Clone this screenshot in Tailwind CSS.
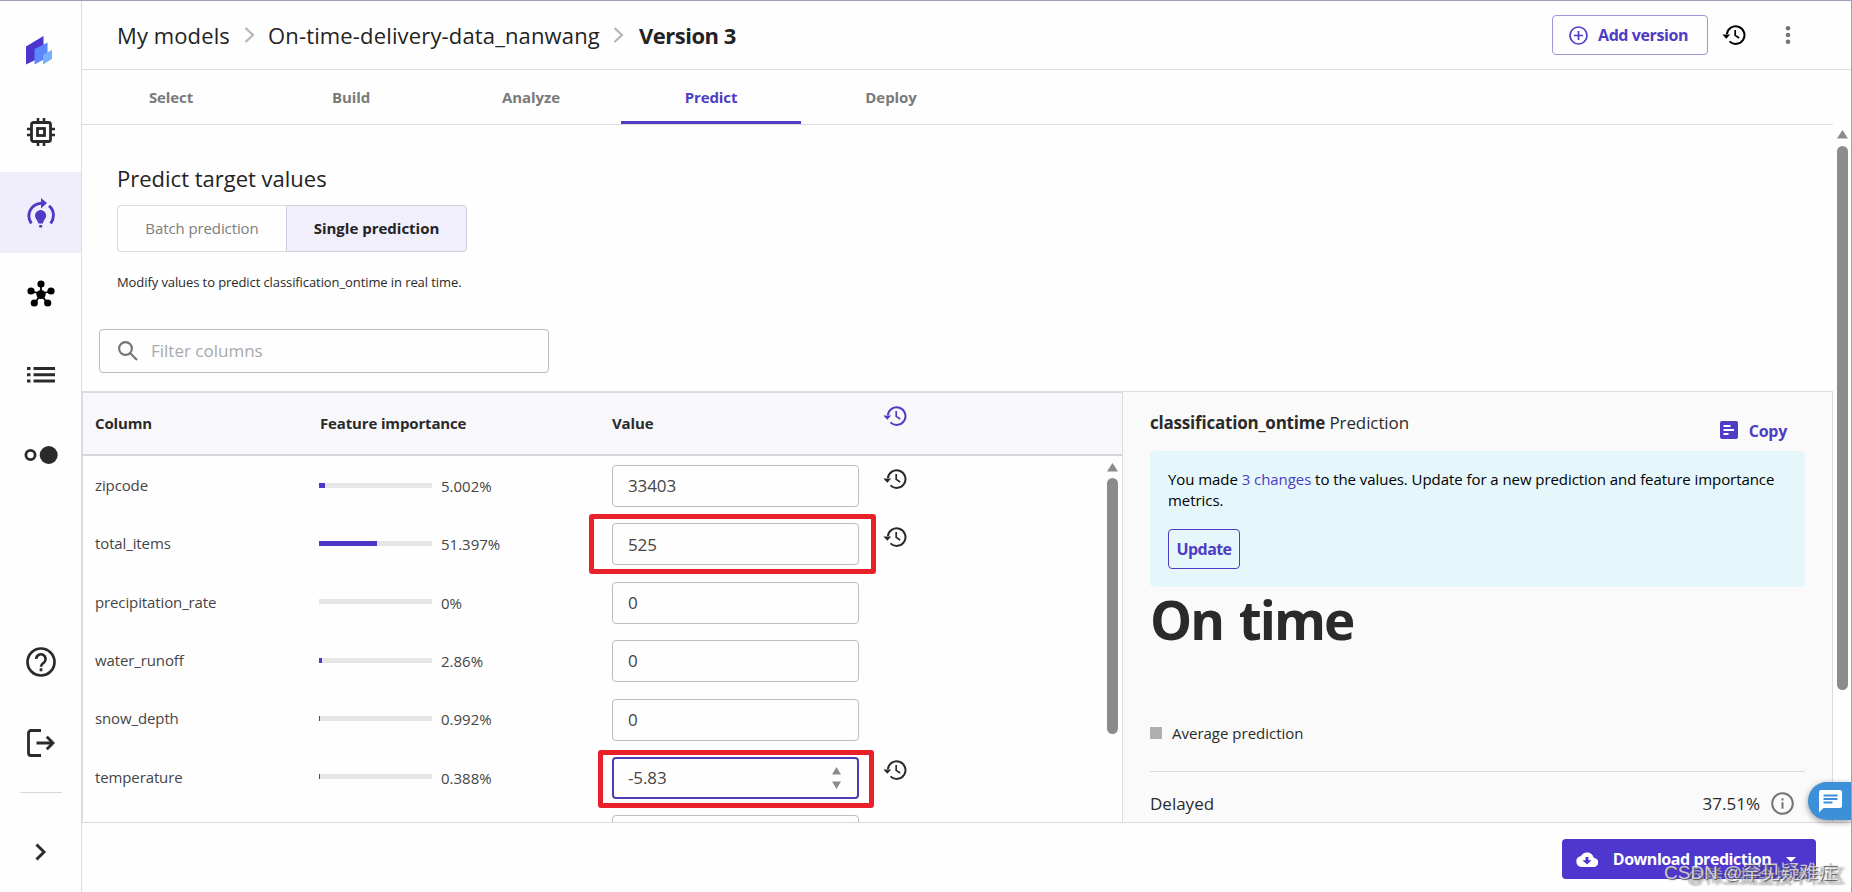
<!DOCTYPE html>
<html lang="en">
<head>
    <meta charset="utf-8">
    <title>My models - Version 3</title>
    <script src="https://cdn.jsdelivr.net/npm/@tailwindcss/browser@4"></script>
</head>
<body class="relative w-[1852px] h-[892px] overflow-hidden bg-[#fefefe] border-t border-r border-[#a19eb5] font-['Open_Sans','Noto_Sans',sans-serif] text-[15px] text-[#2a2a2a]">

<svg class="hidden">
    <symbol id="history" viewBox="0 0 24 24">
        <path d="M4.7 11.2A8.8 8.8 0 1 1 7.3 18.4" fill="none" stroke="currentColor" stroke-width="2" transform="translate(.2 0)"/>
        <path d="M.4 11.6h7.8L4.3 15.8z" fill="currentColor"/>
        <path d="M13.2 7v5.4l4 2.6" fill="none" stroke="currentColor" stroke-width="1.7"/>
    </symbol>
</svg>

<div class="flex h-full">
    <!-- Sidebar -->
    <nav class="w-[82px] shrink-0 border-r border-[#dcdce0] flex flex-col items-center">
        <div class="h-[90px] w-full flex items-center justify-center pt-2 pr-0.5">
            <svg class="w-[27px] h-[29px]" viewBox="0 0 27 29">
                <path d="M0 10.500 17.500 0v20L0 28.500z" fill="#4c35cf"/>
                <path d="M8.500 13 21.500 6.500v15L8.500 28.500z" fill="#5c86fb"/>
                <path d="M17 18.500 26 14v9L17 28.500z" fill="#77b0fd"/>
            </svg>
        </div>
        <div class="h-[81px] w-full flex items-center justify-center">
            <svg class="w-7 h-7" viewBox="0 0 28 28" fill="none" stroke="currentColor">
                <rect x="4.500" y="4.500" width="19" height="19" rx="2" stroke-width="2.800"/>
                <rect x="10.500" y="10.500" width="7" height="7" stroke-width="2.800"/>
                <path d="M11 0v4M17 0v4M11 24v4M17 24v4M0 11h4M0 17h4M24 11h4M24 17h4" stroke-width="2.600"/>
            </svg>
        </div>
        <div class="h-[81px] w-full flex items-center justify-center bg-[#f0eefa] text-[#4f3cc4]">
            <svg class="w-7 h-[30px]" viewBox="0 0 28 30" fill="currentColor">
                <path d="M4.300 25.500C-1.500 16.500 4 5.700 14.500 5.200" fill="none" stroke="currentColor" stroke-width="2.900"/>
                <path d="M22 7.800C27.600 12.500 27.700 19.500 23.700 25.500" fill="none" stroke="currentColor" stroke-width="2.900"/>
                <path d="M14 0l6 5-6 5.500z"/>
                <path d="M13.600 12a5.600 5.600 0 0 1 5.600 5.600c0 3-2.400 4-3.400 8h-4.400c-1-4-3.400-5-3.400-8A5.600 5.600 0 0 1 13.600 12z"/>
                <rect x="12.200" y="27" width="3" height="2.500"/>
            </svg>
        </div>
        <div class="h-[81px] w-full flex items-center justify-center text-black">
            <svg class="w-7 h-7" viewBox="0 0 28 28" fill="currentColor">
                <path d="M14 4v10L4 11M14 14l10-3M14 14L7.300 24M14 14l6.700 10" fill="none" stroke="currentColor" stroke-width="1.800"/>
                <circle cx="14" cy="14.500" r="4.600"/><circle cx="14" cy="4" r="3.600"/><circle cx="4" cy="11" r="3.600"/>
                <circle cx="24" cy="11" r="3.600"/><circle cx="7.300" cy="23" r="3.600"/><circle cx="20.700" cy="23" r="3.600"/>
            </svg>
        </div>
        <div class="h-[81px] w-full flex items-center justify-center">
            <svg class="w-7 h-4" viewBox="0 0 28 16" stroke="currentColor" stroke-width="3">
                <path d="M0 1.500h3.500M6.500 1.500H28M0 7.800h3.500M6.500 7.800H28M0 14.100h3.500M6.500 14.100H28"/>
            </svg>
        </div>
        <div class="h-[81px] w-full flex items-center justify-center pb-0.5">
            <svg class="w-[34px] h-[18px]" viewBox="0 0 34 18">
                <circle cx="6.500" cy="9" r="4.600" fill="none" stroke="currentColor" stroke-width="2.800"/>
                <circle cx="24.700" cy="9" r="9" fill="currentColor"/>
            </svg>
        </div>
        <div class="mt-auto h-[81px] w-full flex items-center justify-center">
            <svg class="w-[30px] h-[30px]" viewBox="0 0 30 30" fill="none" stroke="currentColor" stroke-width="2.700">
                <circle cx="15" cy="15" r="13.500"/>
                <path d="M10.200 12a4.700 4.700 0 1 1 7.600 3.700c-1.800 1.400-2.800 2-2.800 4M15 21.300v2.900"/>
            </svg>
        </div>
        <div class="h-[81px] w-full flex items-center justify-center">
            <svg class="w-7 h-7" viewBox="0 0 28 28" fill="none" stroke="currentColor" stroke-width="2.800">
                <path d="M14 1.500H4A2.500 2.500 0 0 0 1.500 4v20A2.500 2.500 0 0 0 4 26.500h10M9.500 14H26M19.800 7.800 26 14l-6.200 6.200"/>
            </svg>
        </div>
        <div class="mt-[9px] w-[42px] border-t border-[#d8d8d8]"></div>
        <div class="h-[99px] pt-[50px]">
            <svg class="w-3 h-[18px]" viewBox="0 0 12 18" fill="none" stroke="currentColor" stroke-width="2.900"><path d="M1.500 1.500 9 9l-7.500 7.500"/></svg>
        </div>
    </nav>

    <div class="flex-1 flex flex-col min-w-0">
        <!-- Breadcrumbs -->
        <header class="h-[69px] shrink-0 border-b border-[#dedee2] flex items-center pl-[35px] text-[22px] text-[#232323]">
            <span class="w-[114px] whitespace-nowrap tracking-[0.1px]">My models</span>
            <svg class="ml-[13px] mr-[13px] w-[11px] h-4" viewBox="0 0 11 16" fill="none" stroke="#b5b5b5" stroke-width="2.200"><path d="M1.500 1 9 8l-7.500 7"/></svg>
            <span class="w-[333px] whitespace-nowrap tracking-[0.15px]">On-time-delivery-data_nanwang</span>
            <svg class="ml-[12px] mr-[15px] w-[11px] h-4" viewBox="0 0 11 16" fill="none" stroke="#b5b5b5" stroke-width="2.200"><path d="M1.500 1 9 8l-7.500 7"/></svg>
            <span class="font-bold tracking-[-0.5px]">Version 3</span>
            <button class="ml-auto w-[156px] h-10 border border-[#a096d8] rounded flex items-center pl-4 text-[16px] font-bold text-[#4f3cc4]">
                <svg class="w-[19px] h-[19px] mr-[10px]" viewBox="0 0 19 19" fill="none" stroke="currentColor" stroke-width="1.700"><circle cx="9.500" cy="9.500" r="8.500"/><path d="M9.500 5v9M5 9.500h9"/></svg>
                <span class="whitespace-nowrap tracking-[-0.4px]">Add version</span>
            </button>
            <svg class="ml-[14px] w-6 h-6 text-black"><use href="#history"/></svg>
            <svg class="ml-[39px] mr-[60px] w-1.5 h-[18px]" viewBox="0 0 6 18" fill="#757575"><circle cx="3" cy="2.300" r="2.300"/><circle cx="3" cy="9" r="2.300"/><circle cx="3" cy="15.700" r="2.300"/></svg>
        </header>

        <!-- Tabs -->
        <div class="h-[55px] shrink-0 mr-[18px] border-b border-[#dedee2] flex font-bold text-[#7a7a7a] text-center leading-[55px] tracking-[-0.1px]">
            <div class="w-[180px] -ml-px">Select</div>
            <div class="w-[180px]">Build</div>
            <div class="w-[180px]">Analyze</div>
            <div class="w-[180px] text-[#4f3cc4] border-b-3 border-[#4f3cc4]">Predict</div>
            <div class="w-[180px]">Deploy</div>
        </div>

        <div class="h-[266px] shrink-0 flex flex-col items-start">
            <h1 class="ml-[35px] mt-[38px] text-[22px] leading-[30px] text-[#232323]">Predict target values</h1>
            <div class="ml-[35px] mt-[12px] w-[350px] h-[47px] flex leading-[45px] text-center">
                <div class="w-[169px] border border-r-0 border-[#dcdce0] rounded-l text-[#7d7d7d] tracking-[-0.1px]">Batch prediction</div>
                <div class="flex-1 border border-[#d0cce2] rounded-r bg-[#f1effc] font-bold text-[#232323]">Single prediction</div>
            </div>
            <p class="ml-[35px] mt-[20px] text-[13px] leading-5 tracking-[-0.09px]">Modify values to predict classification_ontime in real time.</p>
            <div class="ml-[17px] mt-[37px] w-[450px] h-[44px] border border-[#bdbdbd] rounded flex items-center pl-[18px] text-[17px] text-[#a9a9a9]">
                <svg class="w-5 h-5 mr-[13px]" viewBox="0 0 20 20" fill="none" stroke="#757575" stroke-width="2.200"><circle cx="7.500" cy="7.500" r="6.400"/><path d="M12 12l7 7"/></svg>
                Filter columns
            </div>
        </div>

        <div class="h-[431px] mr-[18px] flex shrink-0 overflow-hidden">
            <!-- Feature table -->
            <section class="relative w-[1041px] shrink-0 border-l border-t-2 border-r border-[#dcdce0] overflow-hidden">
                <div class="h-[63px] bg-[#f8f8fa] border-b-2 border-[#d6d6da] flex items-center pl-[12px] font-bold tracking-[-0.15px]">
                    <div class="w-[225px]">Column</div>
                    <div class="w-[292px]">Feature importance</div>
                    <div class="w-[271px]">Value</div>
                    <svg class="w-6 h-6 mb-4 text-[#4f3cc4]"><use href="#history"/></svg>
                </div>
                <div id="rows"></div>
                <div class="absolute right-[4px] top-[70px] w-[11px]">
                    <svg class="w-[11px] h-[9px]" viewBox="0 0 11 9" fill="#8b8b8b"><path d="M5.500 0 11 8.500H0z"/></svg>
                    <div class="mt-[6px] h-[256px] rounded-full bg-[#8b8b8b]"></div>
                </div>
                <!-- Highlights around edited values -->
                <div class="absolute left-[506px] top-[121px] w-[287px] h-[60px] border-5 border-[#e91f29] rounded-[3px]"></div>
                <div class="absolute left-[515px] top-[357px] w-[276px] h-[58px] border-5 border-[#e91f29] rounded-[3px]"></div>
            </section>

            <!-- Prediction -->
            <section class="flex-1 bg-[#fafafa] border-t border-r border-[#dcdce0] pl-[27px] pr-[27px]">
                <div class="h-[59px] flex justify-between text-[17px]">
                    <div class="pt-[19px] leading-6"><b class="font-bold tracking-[-0.2px]">classification_ontime</b><span class="tracking-[-0.1px]"> Prediction</span></div>
                    <div class="flex items-center pt-[18px] pr-[18px] text-[16px] font-bold text-[#4f3cc4]">
                        <svg class="w-[18px] h-[18px] mr-[11px] -mt-0.5" viewBox="0 0 18 18"><rect width="18" height="18" rx="2" fill="currentColor"/><path d="M3.500 5h7M3.500 9h10.500M3.500 13h5" stroke="#fff" stroke-width="1.800"/></svg>
                        <span class="tracking-[-0.3px]">Copy</span>
                    </div>
                </div>
                <div class="h-[136px] bg-[#e5f7fb] rounded px-[18px] pt-[18px] text-black">
                    <p class="leading-[21px] tracking-[-0.06px]">You made <span class="text-[#4f3cc4]">3 changes</span> to the values. Update for a new prediction and feature importance<br>metrics.</p>
                    <button class="mt-[18px] w-[72px] h-10 border border-[#4f3cc4] rounded text-[16px] font-bold text-[#4f3cc4] tracking-[-0.6px]">Update</button>
                </div>
                <div class="mt-[-2px] h-[133px] leading-[69px] text-[53px] font-bold tracking-[-2px] [word-spacing:4px]">On time</div>
                <div class="h-[54px] border-b border-[#dadada] flex items-start pt-[3px] leading-6">
                    <span class="w-3 h-3 mt-[6px] mr-[10px] bg-[#b0b0b0]"></span>Average prediction
                </div>
                <div class="flex items-center justify-between h-[63px] text-[17px]">
                    <span>Delayed</span>
                    <span class="flex items-center pr-[11px]">37.51%
                        <svg class="ml-[11px] w-[23px] h-[23px]" viewBox="0 0 23 23" fill="none" stroke="#757575" stroke-width="2"><circle cx="11.500" cy="11.500" r="10.300"/><path d="M11.500 10.300v6.500M11.500 6.300v2.200"/></svg>
                    </span>
                </div>
            </section>
        </div>

        <footer class="flex-1 border-t border-[#dadada] pt-[16px] flex justify-end pr-[35px]">
            <button class="w-[254px] h-10 rounded bg-[#4e36cf] text-white text-[16px] font-bold flex items-center pl-[14px]">
                <svg class="w-[22px] h-[15px] mr-[14px]" viewBox="0 0 22 15" fill="#fff"><path fill-rule="evenodd" d="M17.700 5.700A6.900 6.900 0 0 0 5 3.900 5.600 5.600 0 0 0 5.500 15H17.500a4.650 4.650 0 0 0 .2-9.300zM9.500 5h3v3.200h3L11 12.500 6.500 8.200h3z"/></svg>
                <span class="w-[160px] whitespace-nowrap tracking-[-0.45px]">Download prediction</span>
                <svg class="ml-[14px] w-[10px] h-[5px]" viewBox="0 0 10 5" fill="#fff"><path d="M0 0h10L5 5z"/></svg>
            </button>
        </footer>
    </div>
</div>

<!-- Page scrollbar -->
<div class="absolute left-[1837px] top-[129px] w-[11px]">
    <svg class="w-[11px] h-[9px]" viewBox="0 0 11 9" fill="#8b8b8b"><path d="M5.500 0 11 8.500H0z"/></svg>
    <div class="mt-[7px] h-[544px] rounded-full bg-[#8b8c8b]"></div>
</div>

<!-- Chat bubble -->
<div class="absolute right-0 top-[781px] w-[43px] h-[38px] rounded-l-full bg-[#3d90d7] shadow-[0_2px_6px_rgba(0,0,0,0.4)] pl-[11px] pt-2">
    <svg class="w-[23px] h-[23px]" viewBox="0 0 23 23"><path d="M2 0h19a2 2 0 0 1 2 2v14a2 2 0 0 1-2 2H4.500L0 22.500V2a2 2 0 0 1 2-2z" fill="#fff"/><path d="M4.500 5.500h14M4.500 9h14M4.500 12.500h9" stroke="#3d90d7" stroke-width="1.900"/></svg>
</div>

<!-- Watermarks -->
<div class="absolute left-[1687px] top-[864px] whitespace-nowrap text-[18px] leading-6 text-white/50 [text-shadow:0_0_2px_#555] tracking-[-0.5px] font-['Liberation_Sans','Noto_Sans_CJK_SC',sans-serif]">@稀土掘金技术社区</div>
<div class="absolute left-[1664px] top-[860px] whitespace-nowrap text-[19px] leading-6 text-white/70 [text-shadow:1px_1px_1px_#555] font-['Liberation_Sans','Noto_Sans_CJK_SC',sans-serif]">CSDN @罕见疑难症</div>

<script>
    const rows = [
        { name: 'zipcode', importance: 5.002, value: '33403', changed: true },
        { name: 'total_items', importance: 51.397, value: '525', changed: true },
        { name: 'precipitation_rate', importance: 0, value: '0' },
        { name: 'water_runoff', importance: 2.86, value: '0' },
        { name: 'snow_depth', importance: 0.992, value: '0' },
        { name: 'temperature', importance: 0.388, value: '-5.83', changed: true, focused: true },
        { name: '', value: '' },
    ];
    const history = '<svg class="w-6 h-6 ml-[24px] mb-[15px]"><use href="#history"/></svg>';
    const spinner = '<svg class="w-[9px] h-[22px]" viewBox="0 0 9 22" fill="#8b8b8b"><path d="M4.500 0 9 7.500H0zM4.500 22 9 14.500H0z"/></svg>';

    document.getElementById('rows').innerHTML = rows.map(r => `
        <div class="h-[58.4px] pt-[9px] pl-[12px] flex items-start text-[#454545]">
            <div class="h-[42px] flex items-center">
                <div class="w-[224px] tracking-[-0.12px] pb-0.5">${r.name}</div>
                <div class="w-[293px] flex items-center">
                    ${r.name ? `<div class="w-[113px] h-[5px] bg-[#e6e6e6] mr-[9px] -mt-0.5"><div class="h-full bg-[#4f36c8]" style="width:${r.importance && Math.max(r.importance, 0.9)}%"></div></div>
                    <span>${r.importance}%</span>` : ''}
                </div>
                <div class="${r.focused ? 'border-2 border-[#4f3cb4] pl-[14px]' : 'border border-[#bdbdbd] pl-[15px]'} w-[247px] h-[42px] rounded flex items-center justify-between pr-4 text-[17px] tracking-[-0.1px]">
                    <span>${r.value}</span>${r.focused ? spinner : ''}
                </div>
                ${r.changed ? `<span class="text-[#2a2a2a]">${history}</span>` : ''}
            </div>
        </div>`).join('');
</script>
</body>
</html>
